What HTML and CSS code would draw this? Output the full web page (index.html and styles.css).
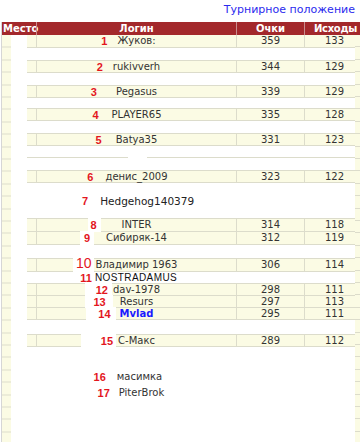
FILE: index.html
```html
<!DOCTYPE html>
<html lang="ru">
<head>
<meta charset="utf-8">
<title>Турнирное положение</title>
<link rel="stylesheet" href="styles.css">
</head>
<body>
<div class="title">Турнирное положение</div>
<div class="table">
  <div class="head">
    <div class="h-place">Место</div>
    <div class="h-login">Логин</div>
    <div class="h-pts">Очки</div>
    <div class="h-out">Исходы</div>
  </div>
  <div class="body">
    <div class="strip left"></div>
    <div class="mask"></div>
    <div class="rows">
      <div class="row r1 h13"><div class="c-place"></div><div class="c-login"><span class="num">1</span><span class="name">Жуков:</span></div><div class="c-pts">359</div><div class="c-out">133</div></div>
      <div class="blank h12"></div>
      <div class="row top r2 h13"><div class="c-place"></div><div class="c-login"><span class="num">2</span><span class="name">rukivverh</span></div><div class="c-pts">344</div><div class="c-out">129</div></div>
      <div class="blank h12"></div>
      <div class="row top r3 h13"><div class="c-place"></div><div class="c-login"><span class="num">3</span><span class="name">Pegasus</span></div><div class="c-pts">339</div><div class="c-out">129</div></div>
      <div class="blank h10"></div>
      <div class="row top r4 h13"><div class="c-place"></div><div class="c-login"><span class="num">4</span><span class="name">PLAYER65</span></div><div class="c-pts">335</div><div class="c-out">128</div></div>
      <div class="blank h12"></div>
      <div class="row top r5 h13"><div class="c-place"></div><div class="c-login"><span class="num">5</span><span class="name">Batya35</span></div><div class="c-pts">331</div><div class="c-out">123</div></div>
      <div class="blank split"><div class="seg first"></div><div class="seg rest"></div></div>
      <div class="row top r6 h13"><div class="c-place"></div><div class="c-login"><span class="num">6</span><span class="name">денис_2009</span></div><div class="c-pts">323</div><div class="c-out">122</div></div>
      <div class="blank hedge"><span class="num">7</span><span class="name big">Hedgehog140379</span></div>
      <div class="row top r8 h14"><div class="c-place"></div><div class="c-login"><span class="num patch">8</span><span class="name">INTER</span></div><div class="c-pts">314</div><div class="c-out">118</div></div>
      <div class="row r9 h13"><div class="c-place"></div><div class="c-login"><span class="num patch">9</span><span class="name">Сибиряк-14</span></div><div class="c-pts">312</div><div class="c-out">119</div></div>
      <div class="blank h13"></div>
      <div class="row top r10 h14"><div class="c-place"></div><div class="c-login"><span class="num patch large">10</span><span class="name">Владимир 1963</span></div><div class="c-pts">306</div><div class="c-out">114</div></div>
      <div class="free r11 h11"><div class="c-place"></div><div class="c-login"><span class="num">11</span><span class="name caps">NOSTRADAMUS</span></div></div>
      <div class="row top r12 h13"><div class="c-place"></div><div class="c-login"><span class="num patch">12</span><span class="name">dav-1978</span></div><div class="c-pts">298</div><div class="c-out">111</div></div>
      <div class="row r13 h12"><div class="c-place"></div><div class="c-login"><span class="num patch">13</span><span class="name">Resurs</span></div><div class="c-pts">297</div><div class="c-out">113</div></div>
      <div class="row r14 h12"><div class="c-place"></div><div class="c-login"><span class="num patch">14</span><span class="name me">Mvlad</span></div><div class="c-pts">295</div><div class="c-out">111</div></div>
      <div class="blank h14"></div>
      <div class="row top r15 h13"><div class="c-place"></div><div class="c-login"><span class="num patch">15</span><span class="name">С-Макс</span></div><div class="c-pts">289</div><div class="c-out">112</div></div>
      <div class="blank tail">
        <div class="free r16 h13"><div class="c-place"></div><div class="c-login"><span class="num">16</span><span class="name">масимка</span></div></div>
        <div class="free r17 h13"><div class="c-place"></div><div class="c-login"><span class="num">17</span><span class="name">PiterBrok</span></div></div>
      </div>
    </div>
    <div class="strip right"></div>
  </div>
</div>
</body>
</html>
```

FILE: styles.css
```css
* {
  box-sizing: border-box;
  margin: 0;
  padding: 0;
}

body {
  margin: 0;
  width: 360px;
  height: 442px;
  overflow: hidden;
  background: #ffffff;
  font-family: "DejaVu Sans", Verdana, sans-serif;
  font-size: 10px;
  color: #333333;
}

.title {
  height: 22px;
  padding-right: 5px;
  text-align: right;
  font-size: 11px;
  line-height: 20px;
  color: #2b2bee;
}

.table {
  margin-left: 1px;
  border-left: 1px solid #d6d6d6;
}

.head {
  display: grid;
  grid-template-columns: 34px 200px 68px 56px;
  height: 13px;
  background: #a3282b;
  color: #ffffff;
  font-weight: bold;
  font-size: 10px;
  line-height: 13px;
  white-space: nowrap;
  overflow: hidden;
}

.h-place {
  padding-left: 1px;
}

.h-login,
.h-pts {
  text-align: center;
  border-left: 1px solid #c98d8d;
}

.h-out {
  padding-left: 9px;
  letter-spacing: -0.3px;
  border-left: 1px solid #c98d8d;
}

.body {
  display: flex;
  height: 407px;
}

.strip {
  background: repeating-linear-gradient(to bottom, #fbfbe4 0, #fbfbe4 11.4px, #dcdccb 11.4px, #dcdccb 12.4px);
}

.strip.left {
  width: 9px;
  background-position: 0 0.5px;
}

.strip.right {
  width: 5px;
}

.mask {
  width: 16px;
}

.rows {
  width: 328px;
  display: flex;
  flex-direction: column;
}

.h10 { height: 10px; }
.h11 { height: 11px; }
.h12 { height: 12px; }
.h13 { height: 13px; }
.h14 { height: 14px; }

.row,
.free {
  display: grid;
  grid-template-columns: 9px 200px 68px 51px;
  line-height: 12px;
  flex: none;
}

.row {
  background: #fbfbe4;
  border-bottom: 1px solid #dcdccb;
}

.row.top {
  border-top: 1px solid #dcdccb;
}

.row .c-login,
.row .c-pts,
.row .c-out {
  border-left: 1px solid #dcdccb;
}

.c-login {
  display: grid;
  grid-template-columns: 1fr auto 1fr;
  align-items: center;
  white-space: nowrap;
}

.c-pts {
  text-align: center;
  align-self: center;
}

.c-out {
  padding-left: 9px;
  text-align: center;
  align-self: center;
}

.num {
  grid-column: 1;
  justify-self: end;
  font-family: "Liberation Sans", Arial, sans-serif;
  font-weight: bold;
  font-size: 11px;
  color: #e3161e;
  line-height: 12px;
}

.name {
  grid-column: 2;
  color: #333333;
}

.num.patch {
  align-self: stretch;
  display: flex;
  align-items: center;
  background: #ffffff;
  margin-top: -1px;
  margin-bottom: -1px;
}

.num.large {
  font-size: 14px;
  font-weight: normal;
  align-items: flex-start;
  line-height: 11px;
}

.name.caps {
  font-family: "Liberation Sans", Arial, sans-serif;
  font-size: 10px;
  letter-spacing: 0.4px;
  color: #111111;
}

.name.me {
  color: #1a1aff;
  font-weight: bold;
}

.name.big {
  font-size: 10.5px;
  color: #222222;
}

.r1 .num { margin-right: 10px; }
.r2 .num { margin-right: 10px; }
.r3 .num { margin-right: 19px; }
.r4 .num { margin-right: 13px; }
.r5 .num { margin-right: 14px; }
.r6 .num { margin-right: 12px; }
.r8 .num { margin-right: 21px; padding: 0 4px 0 2px; }
.r9 .num { margin-right: 12px; padding: 0 4px 0 4px; }
.r10 .num { margin-right: 2px; padding: 0 2px 0 3px; }
.r11 .num { margin-right: 3px; }
.r12 .num { margin-right: 1px; padding: 0 4px 0 11px; }
.r13 .num { margin-right: 7px; padding: 0 7px 0 8px; }
.r14 .num { margin-right: 4px; padding: 0 5px 0 12px; }
.r15 .num { margin-right: 2px; padding: 0 3px 0 20px; }
.r16 .num { margin-right: 11px; }
.r17 .num { margin-right: 9px; }
.r16 .c-login { padding-left: 7px; }
.r17 .c-login { padding-left: 11px; }

.blank {
  flex: none;
}

.split {
  height: 24px;
  padding-top: 11px;
  display: flex;
  gap: 19px;
}

.seg {
  height: 1px;
  background: #dcdccb;
}

.seg.first {
  width: 101px;
}

.seg.rest {
  flex: 1;
}

.hedge {
  height: 35px;
  padding: 12px 0 0 55px;
  display: flex;
  align-items: flex-start;
  line-height: 13px;
  white-space: nowrap;
}

.hedge .num {
  margin-right: 12px;
  line-height: 13px;
}

.tail {
  flex: 1;
  padding-top: 23px;
  display: flex;
  flex-direction: column;
  gap: 3px;
}
```
